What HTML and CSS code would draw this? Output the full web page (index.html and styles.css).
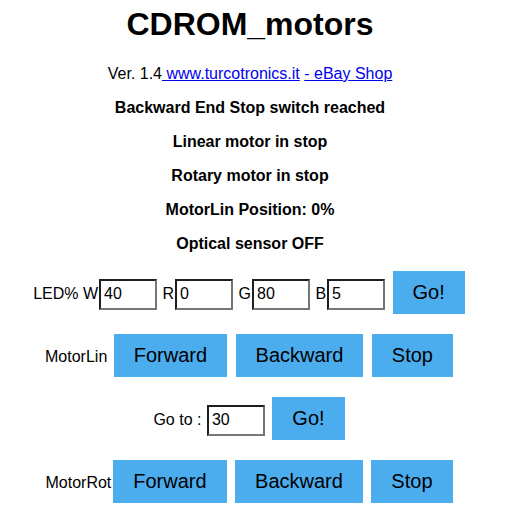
FILE: index.html
```html
<!DOCTYPE html>
<html>
<head>
<meta charset="utf-8">
<title>CDROM_motors</title>
<link rel="stylesheet" href="styles.css">
</head>
<body>
<h1 class="title">CDROM_motors</h1>
<p>Ver. 1.4<a href="#"> www.turcotronics.it</a> <a href="#">- eBay Shop</a></p>
<p class="status">Backward End Stop switch reached</p>
<p class="status">Linear motor in stop</p>
<p class="status">Rotary motor in stop</p>
<p class="status">MotorLin Position: 0%</p>
<p class="status">Optical sensor OFF</p>
<p class="row">LED% W<input class="field" type="text" value="40"> R<input class="field" type="text" value="0"> G<input class="field" type="text" value="80"> B<input class="field" type="text" value="5"> <button class="btn">Go!</button></p>
<p class="row">MotorLin <button class="btn">Forward</button> <button class="btn">Backward</button> <button class="btn">Stop</button></p>
<p class="row">Go to : <input class="field" type="text" value="30"> <button class="btn">Go!</button></p>
<p class="row">MotorRot<button class="btn">Forward</button> <button class="btn">Backward</button> <button class="btn">Stop</button></p>
</body>
</html>
```
FILE: styles.css
```css
html {
  background: #ffffff;
}
body {
  margin: 0;
  max-width: 500px;
  font-family: "Liberation Sans", Arial, Helvetica, sans-serif;
  font-size: 16px;
  color: #000000;
  text-align: center;
}
.title {
  font-size: 32px;
  font-weight: bold;
  margin: 6px 0 22px;
}
p {
  margin: 16px 0;
}
a {
  color: #0000ee;
}
.status {
  font-weight: bold;
}
.field {
  box-sizing: border-box;
  width: 58px;
  height: 31px;
  margin: 0 1px;
  padding: 0 3px;
  font-family: "Liberation Sans", Arial, sans-serif;
  font-size: 16px;
  color: #000000;
  background: #ffffff;
  border-width: 2px;
  border-style: solid;
  border-color: #1e1e1e #767676 #767676 #1e1e1e;
  border-radius: 0;
  vertical-align: baseline;
}
.btn {
  margin: 2px;
  padding: 10px 20px;
  border: none;
  background-color: #4cadee;
  color: #000000;
  font-family: "Liberation Sans", Arial, sans-serif;
  font-size: 20px;
  cursor: pointer;
}
```
